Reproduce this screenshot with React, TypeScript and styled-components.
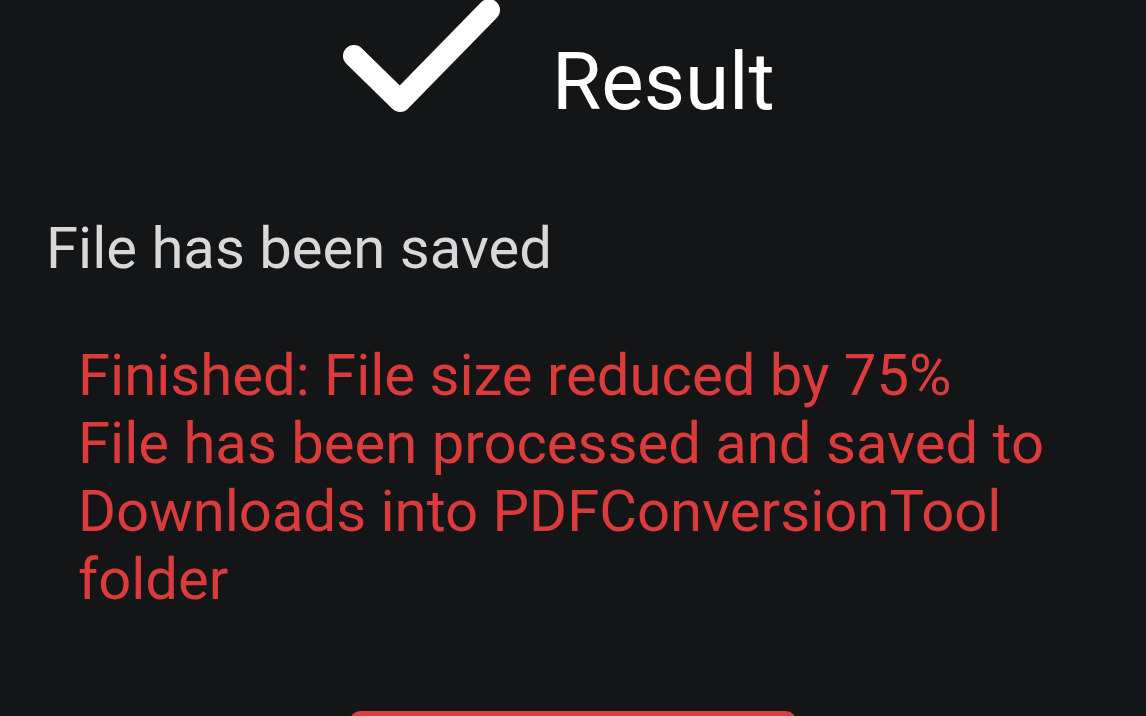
import React from "react";
import styled, { createGlobalStyle } from "styled-components";

const Global = createGlobalStyle`
  html, body { margin: 0; padding: 0; background: #141517; }
  body { font-family: Roboto, "Noto Sans", sans-serif; overflow: hidden; }
`;

const Page = styled.div`
  width: 1146px;
  height: 716px;
  background: #141517;
  display: flex;
  flex-direction: column;
  overflow: hidden;
`;

const Header = styled.div`
  display: flex;
  align-items: flex-end;
  padding-left: 338px;
  height: 122px;
`;

const CheckIcon = styled.svg`
  width: 170px;
  height: 122px;
  flex-shrink: 0;
`;

const Title = styled.h1`
  margin: 0 0 0 44px;
  font-size: 80px;
  font-weight: 400;
  color: #ffffff;
  line-height: 1;
`;

const Saved = styled.p`
  margin: 97px 0 0 46px;
  font-size: 58px;
  line-height: 1;
  color: #d8d8d8;
`;

const Message = styled.p`
  margin: 64px 0 0 78px;
  font-size: 58px;
  line-height: 68px;
  color: #dc3b3b;
  max-width: 1000px;
`;

const ButtonRow = styled.div`
  display: flex;
  padding-left: 350px;
  margin-top: auto;
`;

const Button = styled.button`
  width: 446px;
  height: 60px;
  margin-bottom: -55px;
  border: none;
  border-radius: 10px;
  background: #d9403f;
  color: #fff;
  font-family: inherit;
  font-size: 40px;
`;

export default function App() {
  return (
    <>
      <Global />
      <Page>
        <Header>
          <CheckIcon viewBox="0 0 170 122">
            <polyline
              points="16,56 62,101 151,10"
              fill="none"
              stroke="#ffffff"
              strokeWidth="22"
              strokeLinecap="round"
              strokeLinejoin="round"
            />
          </CheckIcon>
          <Title>Result</Title>
        </Header>
        <Saved>File has been saved</Saved>
        <Message>
          Finished: File size reduced by 75%
          <br />
          File has been processed and saved to Downloads into PDFConversionTool folder
        </Message>
        <ButtonRow>
          <Button aria-label="OK" />
        </ButtonRow>
      </Page>
    </>
  );
}
